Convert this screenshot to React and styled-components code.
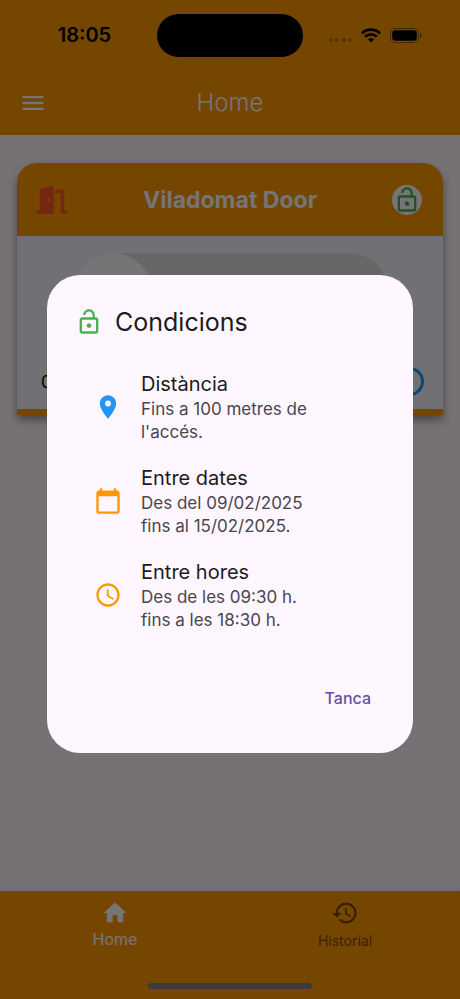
import React from "react";
import styled, { createGlobalStyle } from "styled-components";
import {
  MdAccessTime,
  MdCalendarToday,
  MdHistory,
  MdHome,
  MdLocationOn,
  MdLockOpen,
  MdMenu,
} from "react-icons/md";
import { FaDoorOpen } from "react-icons/fa6";

const GlobalStyle = createGlobalStyle`
  * {
    box-sizing: border-box;
  }

  body {
    margin: 0;
    font-family: Inter, "Liberation Sans", sans-serif;
    background: #fef7ff;
  }

  button {
    font-family: inherit;
    border: none;
    background: none;
    padding: 0;
    cursor: pointer;
  }
`;

const Page = styled.div`
  display: flex;
  flex-direction: column;
  min-height: 100vh;
`;

const Header = styled.header`
  background: #ff9800;
`;

const StatusBar = styled.div`
  display: grid;
  grid-template-columns: 1fr auto 1fr;
  align-items: center;
  height: 70px;
`;

const Time = styled.time`
  justify-self: center;
  padding-left: 12px;
  font-size: 20px;
  font-weight: 600;
  color: #000000;
`;

const Island = styled.div`
  width: 146px;
  height: 43px;
  border-radius: 22px;
  background: #000000;
`;

const StatusIcons = styled.div`
  display: flex;
  align-items: center;
  justify-content: flex-end;
  gap: 9px;
  padding-right: 38px;
`;

const AppBar = styled.div`
  display: grid;
  grid-template-columns: 1fr auto 1fr;
  align-items: center;
  height: 65px;
  padding: 0 19px;
`;

const MenuButton = styled.button`
  display: flex;
  justify-self: start;
  color: #ffffff;
  font-size: 28px;
`;

const PageTitle = styled.h1`
  margin: 0;
  font-size: 24px;
  font-weight: 300;
  line-height: 32px;
  color: #ffffff;
`;

const Main = styled.main`
  flex: 1;
  padding: 28px 17px;
`;

const Card = styled.section`
  overflow: hidden;
  border-bottom: 6px solid #ff9800;
  border-radius: 20px 20px 0 0;
  background: #f6f3ff;
  box-shadow: 0 5px 8px rgba(0, 0, 0, 0.4);
`;

const CardHeader = styled.div`
  display: flex;
  align-items: center;
  justify-content: space-between;
  height: 73px;
  padding: 0 21px 0 19px;
  background: #ff9800;
`;

const DoorIcon = styled(FaDoorOpen)`
  width: 32px;
  height: 28px;
  color: #ff5722;
`;

const CardTitle = styled.h2`
  margin: 0;
  font-size: 23px;
  font-weight: 700;
  color: #ffffff;
`;

const LockBadge = styled.div`
  display: flex;
  align-items: center;
  justify-content: center;
  width: 30px;
  height: 30px;
  border-radius: 50%;
  background: #ffffff;
  color: #4caf50;
  font-size: 28px;
`;

const CardBody = styled.div`
  display: flex;
  flex-direction: column;
  gap: 36px;
  padding: 17px 19px 13px 24px;
`;

const SlideTrack = styled.div`
  margin: 0 36px 0 33px;
  border-radius: 40px;
  background: #e0e0e0;
`;

const SlideButton = styled.button`
  display: block;
  width: 78px;
  height: 78px;
  border-radius: 50%;
  background: #ffffff;
`;

const CardFooter = styled.div`
  display: flex;
  align-items: center;
  justify-content: space-between;
  font-size: 17px;
`;

const Ring = styled.span`
  width: 29px;
  height: 29px;
  border: 3px solid #2196f3;
  border-radius: 50%;
`;

const BottomNav = styled.nav`
  display: grid;
  grid-template-columns: 1fr 1fr;
  background: #ff9800;
  box-shadow: 0 -1px 4px rgba(0, 0, 0, 0.1);
`;

const NavItem = styled.a`
  display: flex;
  flex-direction: column;
  align-items: center;
  height: 92px;
  padding-top: 8px;
  font-size: ${(props) => (props.$active ? "16px" : "14px")};
  line-height: ${(props) => (props.$active ? "24px" : "28px")};
  color: ${(props) => (props.$active ? "#ffffff" : "rgba(0, 0, 0, 0.54)")};
  text-decoration: none;

  svg {
    width: 28px;
    height: 28px;
  }
`;

const HomeIndicator = styled.div`
  grid-column: 1 / -1;
  justify-self: center;
  width: 164px;
  height: 6px;
  margin-bottom: 10px;
  border-radius: 3px;
  background: #808080;
`;

const Scrim = styled.div`
  position: fixed;
  inset: 0;
  display: flex;
  align-items: center;
  justify-content: center;
  padding: 69px 47px 40px;
  background: rgba(0, 0, 0, 0.54);
`;

const Dialog = styled.div`
  width: 100%;
  max-width: 560px;
  padding: 28px 28px 32px;
  border-radius: 33px;
  background: #fef7ff;
`;

const DialogTitle = styled.h2`
  display: flex;
  align-items: center;
  gap: 12px;
  margin: 0;
  font-size: 25px;
  font-weight: 400;
  line-height: 38px;
  color: #1d1b20;

  svg {
    width: 28px;
    height: 28px;
    color: #4caf50;
  }
`;

const Conditions = styled.ul`
  margin: 0;
  padding: 19px 19px 0;
  list-style: none;
`;

const Condition = styled.li`
  display: flex;
  align-items: center;
  gap: 19px;
  padding: 10px 0;

  svg {
    flex: none;
    width: 28px;
    height: 28px;
    color: ${(props) => props.$color};
  }
`;

const ConditionTitle = styled.h3`
  margin: 0;
  font-size: 20px;
  font-weight: 400;
  line-height: 28px;
  color: #1d1b20;
`;

const ConditionText = styled.p`
  margin: 0;
  font-size: 17px;
  line-height: 23px;
  color: #49454f;
  white-space: pre-line;
`;

const Actions = styled.div`
  display: flex;
  justify-content: flex-end;
  padding-top: 32px;
`;

const CloseButton = styled.button`
  height: 47px;
  padding: 0 14px;
  font-size: 16px;
  font-weight: 500;
  color: #6750a4;
`;

const conditions = [
  {
    icon: MdLocationOn,
    color: "#2196f3",
    title: "Distància",
    text: "Fins a 100 metres de\nl'accés.",
  },
  {
    icon: MdCalendarToday,
    color: "#ff9800",
    title: "Entre dates",
    text: "Des del 09/02/2025\nfins al 15/02/2025.",
  },
  {
    icon: MdAccessTime,
    color: "#ff9800",
    title: "Entre hores",
    text: "Des de les 09:30 h.\nfins a les 18:30 h.",
  },
];

function PhoneStatus() {
  return (
    <StatusIcons>
      <svg width="23" height="14" viewBox="0 0 23 14" fill="#000" opacity="0.25">
        <circle cx="2" cy="12" r="2" />
        <circle cx="8" cy="12" r="2" />
        <circle cx="15" cy="12" r="2" />
        <circle cx="21" cy="12" r="2" />
      </svg>
      <svg width="20" height="15" viewBox="0 0 20 15" fill="none" stroke="#000" strokeWidth="2.8">
        <path d="M1 5.4a12.8 12.8 0 0 1 18 0" />
        <path d="M4.2 8.8a8.2 8.2 0 0 1 11.6 0" />
        <path d="M7 11.4a4.4 4.4 0 0 1 6 0L10 14.6z" fill="#000" stroke="none" />
      </svg>
      <svg width="32" height="15" viewBox="0 0 32 15">
        <rect x="0.5" y="0.5" width="28" height="14" rx="4.5" fill="none" stroke="#000" strokeOpacity="0.4" />
        <rect x="2.2" y="2.2" width="24.6" height="10.6" rx="3" />
        <path d="M30 5v5c1-.4 1.7-1.4 1.7-2.5S31 5.4 30 5z" opacity="0.5" />
      </svg>
    </StatusIcons>
  );
}

function App() {
  const [open, setOpen] = React.useState(true);

  return (
    <>
      <GlobalStyle />
      <Page>
        <Header>
          <StatusBar>
            <Time>18:05</Time>
            <Island />
            <PhoneStatus />
          </StatusBar>
          <AppBar>
            <MenuButton aria-label="Menú">
              <MdMenu />
            </MenuButton>
            <PageTitle>Home</PageTitle>
          </AppBar>
        </Header>
        <Main>
          <Card>
            <CardHeader>
              <DoorIcon />
              <CardTitle>Viladomat Door</CardTitle>
              <LockBadge>
                <MdLockOpen />
              </LockBadge>
            </CardHeader>
            <CardBody>
              <SlideTrack>
                <SlideButton aria-label="Obre la porta" />
              </SlideTrack>
              <CardFooter>
                <span>0</span>
                <Ring />
              </CardFooter>
            </CardBody>
          </Card>
        </Main>
        <BottomNav>
          <NavItem href="#home" $active>
            <MdHome />
            Home
          </NavItem>
          <NavItem href="#historial">
            <MdHistory />
            Historial
          </NavItem>
          <HomeIndicator />
        </BottomNav>
      </Page>
      {open && (
        <Scrim>
          <Dialog role="dialog" aria-modal="true" aria-labelledby="dialog-title">
            <DialogTitle id="dialog-title">
              <MdLockOpen />
              Condicions
            </DialogTitle>
            <Conditions>
              {conditions.map(({ icon: Icon, color, title, text }) => (
                <Condition key={title} $color={color}>
                  <Icon />
                  <div>
                    <ConditionTitle>{title}</ConditionTitle>
                    <ConditionText>{text}</ConditionText>
                  </div>
                </Condition>
              ))}
            </Conditions>
            <Actions>
              <CloseButton onClick={() => setOpen(false)}>Tanca</CloseButton>
            </Actions>
          </Dialog>
        </Scrim>
      )}
    </>
  );
}

export default App;
